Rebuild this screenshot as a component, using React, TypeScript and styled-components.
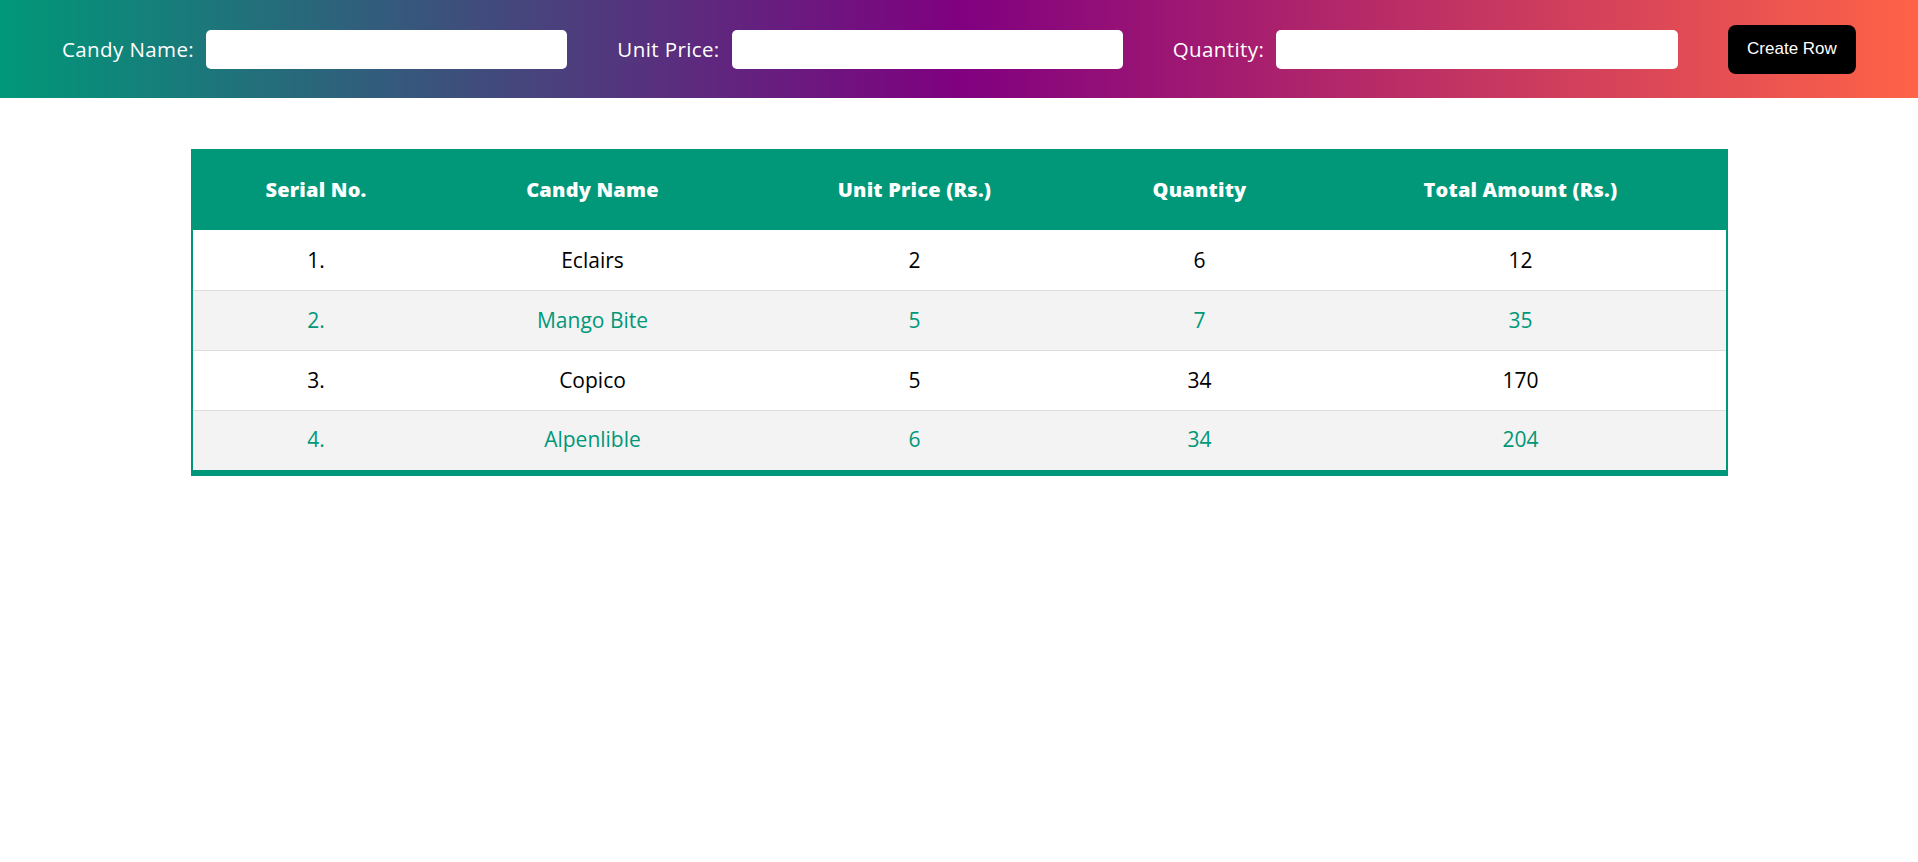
import React from "react";
import styled, { createGlobalStyle } from "styled-components";

const GlobalStyle = createGlobalStyle`
  html, body { margin: 0; padding: 0; background: #ffffff; }
  body { font-family: "Open Sans", "Noto Sans", sans-serif; }
  * { box-sizing: border-box; }
`;

const Header = styled.header`
  height: 98px;
  display: flex;
  align-items: center;
  gap: 50px;
  padding: 0 62px;
  background: linear-gradient(to right, #009879 0%, #800080 50%, #ff6347 100%);
`;

const Field = styled.label`
  flex: 1;
  display: flex;
  align-items: center;
  gap: 12px;
  color: #ffffff;
  font-family: "Open Sans", sans-serif;
  font-size: 20.5px;
  letter-spacing: 0.4px;
  white-space: nowrap;
`;

const Input = styled.input`
  flex: 1;
  min-width: 0;
  height: 39px;
  border: none;
  border-radius: 5px;
  background: #ffffff;
  outline: none;
  font-size: 16px;
  padding: 0 10px;
`;

const Button = styled.button`
  width: 128px;
  height: 49px;
  border: none;
  border-radius: 8px;
  background: #000000;
  color: #ffffff;
  font-family: "Liberation Sans", Arial, sans-serif;
  font-size: 17px;
  cursor: pointer;
`;

const Main = styled.main`
  display: flex;
  justify-content: center;
  padding-top: 51px;
`;

const Table = styled.table`
  width: 1535px;
  border-collapse: collapse;
  border-left: 2px solid #009879;
  border-right: 2px solid #009879;
  font-family: "Open Sans", sans-serif;
  table-layout: fixed;
`;

const HeadRow = styled.tr`
  background: #009879;
  color: #ffffff;
`;

const Th = styled.th<{ $w: number }>`
  width: ${(p) => p.$w}px;
  height: 81px;
  font-size: 20px;
  font-weight: 800;
  letter-spacing: 0.2px;
  text-align: center;
  padding: 0;
`;

const Row = styled.tr<{ $even: boolean }>`
  background: ${(p) => (p.$even ? "#f3f3f3" : "#ffffff")};
  color: ${(p) => (p.$even ? "#009879" : "#000000")};
  border-bottom: 1px solid #dddddd;
  &:last-of-type {
    border-bottom: 6px solid #009879;
  }
  &:last-of-type > td {
    height: 63px;
    padding-bottom: 3px;
  }
`;

const Td = styled.td`
  height: 60px;
  font-size: 21px;
  text-align: center;
  padding: 0;
`;

const columns = [
  { label: "Serial No.", w: 248 },
  { label: "Candy Name", w: 306 },
  { label: "Unit Price (Rs.)", w: 338 },
  { label: "Quantity", w: 232 },
  { label: "Total Amount (Rs.)", w: 411 },
];

const rows = [
  { name: "Eclairs", price: 2, qty: 6 },
  { name: "Mango Bite", price: 5, qty: 7 },
  { name: "Copico", price: 5, qty: 34 },
  { name: "Alpenlible", price: 6, qty: 34 },
];

export default function App() {
  return (
    <>
      <GlobalStyle />
      <Header>
        <Field>
          Candy Name:
          <Input type="text" />
        </Field>
        <Field>
          Unit Price:
          <Input type="text" />
        </Field>
        <Field>
          Quantity:
          <Input type="text" />
        </Field>
        <Button>Create Row</Button>
      </Header>
      <Main>
        <Table>
          <thead>
            <HeadRow>
              {columns.map((c) => (
                <Th key={c.label} $w={c.w}>
                  {c.label}
                </Th>
              ))}
            </HeadRow>
          </thead>
          <tbody>
            {rows.map((r, i) => (
              <Row key={r.name} $even={i % 2 === 1}>
                <Td>{i + 1}.</Td>
                <Td>{r.name}</Td>
                <Td>{r.price}</Td>
                <Td>{r.qty}</Td>
                <Td>{r.price * r.qty}</Td>
              </Row>
            ))}
          </tbody>
        </Table>
      </Main>
    </>
  );
}
